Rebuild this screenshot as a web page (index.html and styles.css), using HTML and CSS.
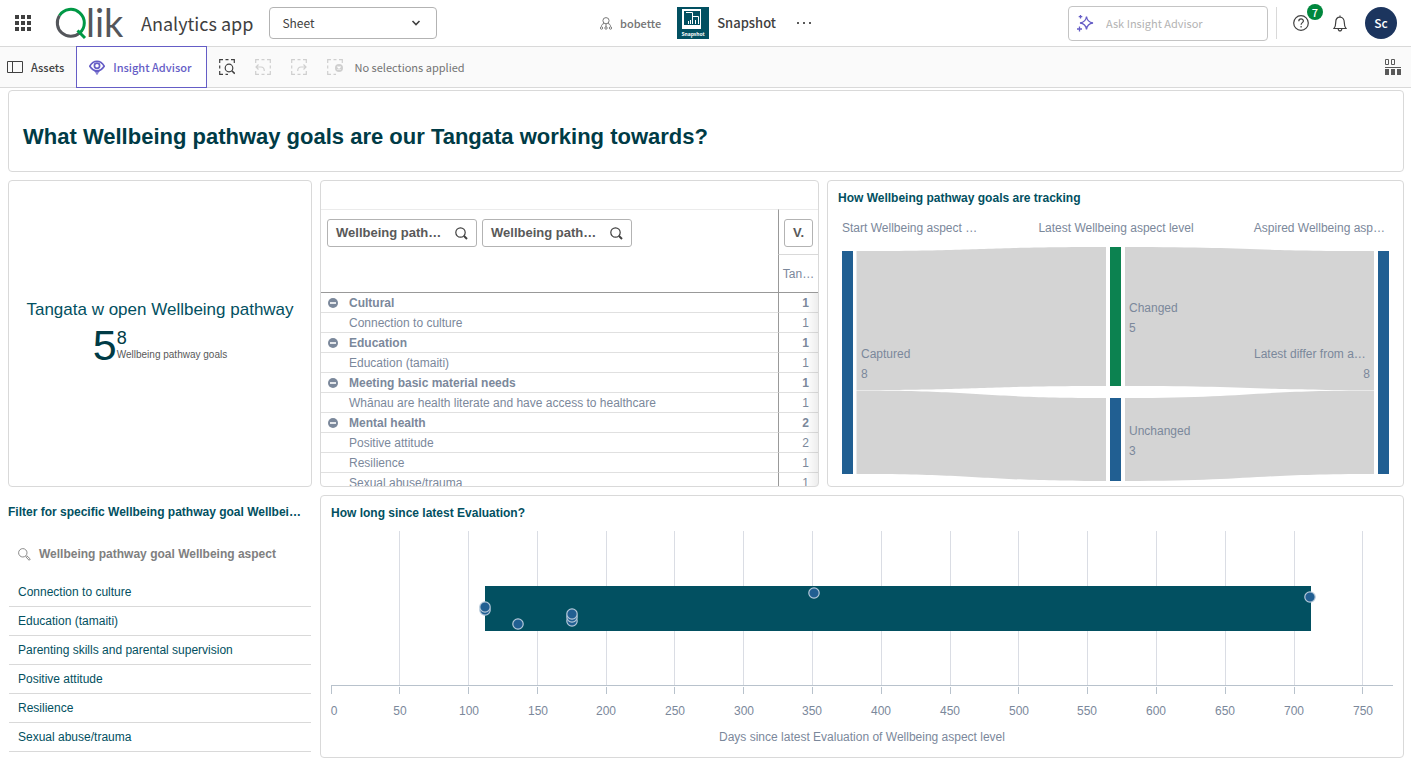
FILE: index.html
```html
<!DOCTYPE html>
<html lang="en">
<head>
<meta charset="utf-8">
<title>Snapshot - Analytics app</title>
<meta name="viewport" content="width=device-width, initial-scale=1">
<link rel="stylesheet" href="styles.css">
</head>
<body>
<header class="topbar">
  <div class="topbar-left">
    <button class="icon-btn launcher" aria-label="Navigation menu">
      <svg width="16" height="16" viewBox="0 0 16 16" fill="#404040"><path d="M0 0h4v4H0zM6 0h4v4H6zM12 0h4v4h-4zM0 6h4v4H0zM6 6h4v4H6zM12 6h4v4h-4zM0 12h4v4H0zM6 12h4v4H6zM12 12h4v4h-4z"/></svg>
    </button>
    <a class="logo" href="#" aria-label="Qlik">
      <svg class="logo-art" width="70" height="32" viewBox="0 0 70 32">
        <path d="M4.500 8.500A13.500 13.500 0 0 0 24.500 26.200" fill="none" stroke="#54565b" stroke-width="3"/>
        <path d="M4.500 8.500A13.500 13.500 0 1 1 24.500 26.200" fill="none" stroke="#009845" stroke-width="3"/>
        <path d="M22.500 23.500L30 31" stroke="#009845" stroke-width="3"/>
        <text class="logo-text" x="31" y="30">lik</text>
      </svg>
    </a>
    <span class="app-name">Analytics app</span>
    <div class="select-wrap">
      <select class="sheet-select" aria-label="View"><option>Sheet</option></select>
      <svg class="select-arrow" width="10" height="6" viewBox="0 0 10 6" fill="none" stroke="#404040" stroke-width="1.600"><path d="M1.500 1L5 4.500 8.500 1"/></svg>
    </div>
  </div>
  <div class="topbar-center">
    <a class="space" href="#">
      <svg width="12" height="13" viewBox="0 0 12 13" fill="none" stroke="#7a7a7a"><circle cx="6" cy="3.700" r="3.100"/><path d="M6 7v3M4.300 6.400C2 7 1.500 8 1.500 9.500M7.700 6.400C10 7 10.500 8 10.500 9.500"/><circle cx="1.500" cy="11" r="1.200"/><circle cx="6" cy="11" r="1.200"/><circle cx="10.500" cy="11" r="1.200"/></svg>
      <span>bobette</span>
    </a>
    <svg class="app-thumb" width="32" height="32" viewBox="0 0 32 32">
      <path d="M0 0h32v32H0z" fill="#025061"/><path d="M5 2h19v20H5z" fill="#fff"/><path d="M7 4h16v14H7z" fill="#025061"/>
      <path d="M9 5.500h6.500V17M15.500 9.500h6V17M11.500 17v-3M13.500 17v-4M18.500 17v-4" fill="none" stroke="#fff"/>
      <text class="thumb-text" x="16" y="29" text-anchor="middle">Snapshot</text>
    </svg>
    <span class="app-title">Snapshot</span>
    <button class="icon-btn more" aria-label="More">
      <svg width="16" height="4" viewBox="0 0 16 4" fill="#595959"><path d="M1 1h2v2H1zM7 1h2v2H7zM13 1h2v2h-2z"/></svg>
    </button>
  </div>
  <div class="topbar-right">
    <label class="ask">
      <svg width="17" height="18" viewBox="0 0 17 18" fill="none" stroke="#655dc6" stroke-width="1.300"><path d="M9.500 2.500C10 6.500 12 8.500 16 9 12 9.500 10 11.500 9.500 15.500 9 11.500 7 9.500 3 9 7 8.500 9 6.500 9.500 2.500z"/><path d="M3.500 1v3.500M1.700 2.700h3.600M2.500 12.500v5M0 15h5"/></svg>
      <input class="ask-input" type="text" placeholder="Ask Insight Advisor" aria-label="Ask Insight Advisor">
    </label>
    <span class="divider"></span>
    <button class="icon-btn help" aria-label="Help">
      <svg width="16" height="16" viewBox="0 0 16 16" fill="none" stroke="#404040" stroke-width="1.200"><circle cx="8" cy="8" r="7.300"/><path d="M5.800 6.200c0-3 4.600-2.900 4.600-.2 0 1.600-2.300 1.700-2.300 3.700"/><path d="M8.100 11v1.400"/></svg>
      <span class="badge">7</span>
    </button>
    <button class="icon-btn" aria-label="Notifications">
      <svg width="14" height="17" viewBox="0 0 14 17" fill="none" stroke="#404040" stroke-width="1.200"><path d="M1 13.500C2.500 12 2.700 10.500 2.700 7.500 2.700 4 4.500 2.200 7 2.200s4.300 1.800 4.300 5.300c0 3 .2 4.500 1.700 6zM7 2.200V.4M5.200 13.700c.2 3 3.400 3 3.600 0"/></svg>
    </button>
    <button class="avatar" aria-label="Profile">Sc</button>
  </div>
</header>

<nav class="toolbar">
  <button class="tool assets">
    <svg width="16" height="12" viewBox="0 0 16 12" fill="none" stroke="#404040"><path d="M.5.5h15v11H.5zM5.500.5v11"/></svg>
    <span>Assets</span>
  </button>
  <button class="tool insight">
    <svg width="16" height="15" viewBox="0 0 16 15"><path d="M.8 6.200C4.500-.4 11.500-.4 15.200 6.200 13 9.500 11 10.800 8 10.800S3 9.500.8 6.200z" fill="none" stroke="#655dc6" stroke-width="1.700"/><circle cx="8" cy="5.800" r="2.600" fill="none" stroke="#655dc6" stroke-width="1.700"/><path d="M5 10.500h6l-1.500 2.200h-3zM6.500 13.300h3L8 15z" fill="#655dc6"/></svg>
    <span>Insight Advisor</span>
  </button>
  <div class="selection-tools">
    <button class="icon-btn" aria-label="Selections tool">
      <svg width="16" height="16" viewBox="0 0 16 16" fill="none" stroke="#404040" stroke-width="1.200"><path d="M.7 4V.7H4M6.500.7h3M12 .7h3.300V4M.7 6.500v3M.7 12v3.300H4M6.500 15.300H9"/><circle cx="10" cy="9" r="3.800"/><path d="M12.800 11.800l3 3" stroke-width="1.600"/></svg>
    </button>
    <button class="icon-btn" aria-label="Step back" disabled>
      <svg width="16" height="16" viewBox="0 0 16 16" fill="none" stroke="#cfcfcf" stroke-width="1.200"><path d="M.7 4V.7H4M6.500.7h3M12 .7h3.300V4M.7 12v3.300H4M6.500 15.300h3M12 15.300h3.300V12M15.300 6.500v3M3.500 5.500L1 8l2.500 2.500M1 8h5c2.500 0 3.300 1.500 3.300 4"/></svg>
    </button>
    <button class="icon-btn" aria-label="Step forward" disabled>
      <svg width="16" height="16" viewBox="0 0 16 16" fill="none" stroke="#cfcfcf" stroke-width="1.200"><path d="M.7 4V.7H4M6.500.7h3M12 .7h3.300V4M.7 12v3.300H4M6.500 15.300h3M12 15.300h3.300V12M.7 6.500v3M12.500 5.500L15 8l-2.500 2.500M15 8h-5c-2.500 0-3.300 1.500-3.300 4"/></svg>
    </button>
    <button class="icon-btn" aria-label="Clear all selections" disabled>
      <svg width="16" height="16" viewBox="0 0 16 16" fill="none" stroke="#cfcfcf" stroke-width="1.200"><path d="M.7 4V.7H4M6.500.7h3M12 .7h3.300V4M.7 6.500v3M.7 12v3.300H4M6.500 15.300H9"/><circle cx="12" cy="9" r="4" fill="#cfcfcf" stroke="none"/><path d="M10.500 7.500l3 3M13.500 7.500l-3 3" stroke="#fff" stroke-width="1.400"/></svg>
    </button>
  </div>
  <span class="selection-text">No selections applied</span>
  <button class="icon-btn sheets" aria-label="Sheets">
    <svg width="16" height="16" viewBox="0 0 16 16" fill="#595959"><path d="M0 8h16v1H0zM0 10h4v6H0zM6 10h4v6H6zM12 10h4v6h-4z"/><path d="M.5.5h3v5h-3zM6.500.5h3v5h-3z" fill="none" stroke="#595959"/></svg>
  </button>
</nav>

<main class="sheet">
  <section class="card banner"><h1 class="banner-title">What Wellbeing pathway goals are our Tangata working towards?</h1></section>

  <section class="card kpi">
    <h2 class="kpi-title">Tangata w open Wellbeing pathway</h2>
    <div class="kpi-values">
      <span class="kpi-main">5</span>
      <div class="kpi-second"><span class="kpi-count">8</span><span class="kpi-label">Wellbeing pathway goals</span></div>
    </div>
  </section>

  <section class="card pivot">
    <table class="pivot-table">
      <colgroup><col><col class="measure-col"></colgroup>
      <thead>
        <tr>
          <th class="dims" rowspan="2"><div class="dim-buttons">
            <button class="dim-btn"><span>Wellbeing path…</span><svg width="13" height="13" viewBox="0 0 13 13" fill="none" stroke="#404040" stroke-width="1.200"><circle cx="5.500" cy="5.500" r="4.700"/><path d="M9 9l3 3" stroke-width="2"/></svg></button>
            <button class="dim-btn"><span>Wellbeing path…</span><svg width="13" height="13" viewBox="0 0 13 13" fill="none" stroke="#404040" stroke-width="1.200"><circle cx="5.500" cy="5.500" r="4.700"/><path d="M9 9l3 3" stroke-width="2"/></svg></button>
          </div></th>
          <th class="values-head"><button class="values-btn">V.</button></th>
        </tr>
        <tr><th class="measure-head">Tan…</th></tr>
      </thead>
      <tbody>
        <tr class="group"><td><button class="toggle" aria-label="Collapse Cultural"></button>Cultural</td><td>1</td></tr>
        <tr><td>Connection to culture</td><td>1</td></tr>
        <tr class="group"><td><button class="toggle" aria-label="Collapse Education"></button>Education</td><td>1</td></tr>
        <tr><td>Education (tamaiti)</td><td>1</td></tr>
        <tr class="group"><td><button class="toggle" aria-label="Collapse Meeting basic material needs"></button>Meeting basic material needs</td><td>1</td></tr>
        <tr><td>Whānau are health literate and have access to healthcare</td><td>1</td></tr>
        <tr class="group"><td><button class="toggle" aria-label="Collapse Mental health"></button>Mental health</td><td>2</td></tr>
        <tr><td>Positive attitude</td><td>2</td></tr>
        <tr><td>Resilience</td><td>1</td></tr>
        <tr><td>Sexual abuse/trauma</td><td>1</td></tr>
      </tbody>
    </table>
  </section>

  <section class="card chart">
    <h2 class="chart-title">How Wellbeing pathway goals are tracking</h2>
    <svg class="plot" viewBox="0 0 575 274">
      <g fill="#d4d4d4">
        <path d="M28.500 39C153 39 153 35 278 35V174C153 174 153 178 28.500 178z"/>
        <path d="M28.500 178.500C153 178.500 153 186 278 186V269C153 269 153 262 28.500 262z"/>
        <path d="M297 35C422 35 422 39 546 39V178C422 178 422 174 297 174z"/>
        <path d="M297 186C422 186 422 178.500 546 178.500V262C422 262 422 269 297 269z"/>
      </g>
      <path d="M14 39h11v223H14zM282 186h11v83h-11zM550 39h11v223h-11z" fill="#215f92"/>
      <path d="M282 35h11v139h-11z" fill="#0c8250"/>
      <g class="plot-text">
        <text x="14" y="20">Start Wellbeing aspect …</text>
        <text x="288" y="20" text-anchor="middle">Latest Wellbeing aspect level</text>
        <text x="557" y="20" text-anchor="end">Aspired Wellbeing asp…</text>
        <text x="33" y="146">Captured</text><text x="33" y="166">8</text>
        <text x="301" y="100">Changed</text><text x="301" y="120">5</text>
        <text x="426" y="146">Latest differ from a…</text><text x="542" y="166" text-anchor="end">8</text>
        <text x="301" y="223">Unchanged</text><text x="301" y="243">3</text>
      </g>
    </svg>
  </section>

  <section class="filter">
    <h2 class="filter-title">Filter for specific Wellbeing pathway goal Wellbeing aspect</h2>
    <button class="filter-field">
      <svg width="13" height="13" viewBox="0 0 13 13" fill="none" stroke="#8a8a8a"><circle cx="4.800" cy="4.800" r="4.200"/><path d="M7.800 8.800l1-1 3.500 3.200-1.200 1.300z"/></svg>
      <span>Wellbeing pathway goal Wellbeing aspect</span>
    </button>
    <ul class="filter-list">
      <li>Connection to culture</li>
      <li>Education (tamaiti)</li>
      <li>Parenting skills and parental supervision</li>
      <li>Positive attitude</li>
      <li>Resilience</li>
      <li>Sexual abuse/trauma</li>
    </ul>
  </section>

  <section class="card chart evaluation">
    <h2 class="chart-title">How long since latest Evaluation?</h2>
    <svg class="plot" viewBox="0 0 1082 230">
      <path d="M78.500 4v154M147.500 4v154M216.500 4v154M285.500 4v154M353.500 4v154M422.500 4v154M491.500 4v154M560.500 4v154M629.500 4v154M697.500 4v154M766.500 4v154M835.500 4v154M904.500 4v154M973.500 4v154M1041.500 4v154" stroke="#dadde4"/>
      <path d="M10 158.500h1062M10.500 158v9M78.500 160v7M147.500 160v7M216.500 160v7M285.500 160v7M353.500 160v7M422.500 160v7M491.500 160v7M560.500 160v7M629.500 160v7M697.500 160v7M766.500 160v7M835.500 160v7M904.500 160v7M973.500 160v7M1041.500 160v7" fill="none" stroke="#b8c2cc"/>
      <path d="M164 59h826v45H164z" fill="#025061"/>
      <g fill="#215f92" stroke="#b5c9da" stroke-width="1.200">
        <circle cx="164" cy="83" r="5.200"/><circle cx="164" cy="80" r="5.200"/><circle cx="197" cy="97" r="5.200"/>
        <circle cx="251" cy="94" r="5.200"/><circle cx="251" cy="90" r="5.200"/><circle cx="251" cy="87" r="5.200"/>
        <circle cx="493" cy="66" r="5.200"/><circle cx="989" cy="70" r="5.200"/>
      </g>
      <g class="plot-text" text-anchor="middle">
        <text x="13" y="188">0</text><text x="79" y="188">50</text><text x="148" y="188">100</text><text x="217" y="188">150</text><text x="285" y="188">200</text><text x="354" y="188">250</text><text x="423" y="188">300</text><text x="491" y="188">350</text><text x="560" y="188">400</text><text x="629" y="188">450</text><text x="698" y="188">500</text><text x="766" y="188">550</text><text x="835" y="188">600</text><text x="904" y="188">650</text><text x="973" y="188">700</text><text x="1042" y="188">750</text>
        <text x="541" y="214">Days since latest Evaluation of Wellbeing aspect level</text>
      </g>
    </svg>
  </section>
</main>
</body>
</html>
```
FILE: styles.css
```css
:root {
  --ui: "Noto Sans CJK SC", "Noto Sans", sans-serif;
  --data: "Liberation Sans", Arial, sans-serif;
  --teal: #025061;
  --slate: #7b889b;
  --line: #d9d9d9;
}

* { box-sizing: border-box; }

body {
  display: flex;
  flex-direction: column;
  min-height: 100vh;
  margin: 0;
  background: #fff;
  font: 12px/16px var(--data);
}

button, select, input { font: inherit; color: inherit; }
h1, h2, ul { margin: 0; padding: 0; }
svg { display: block; flex: none; }

.icon-btn {
  display: flex;
  align-items: center;
  justify-content: center;
  padding: 0;
  border: 0;
  background: none;
}

/* Top bar */
.topbar {
  display: grid;
  grid-template-columns: 1fr auto 1fr;
  align-items: center;
  height: 46px;
  padding: 0 14px 0 15px;
  color: #404040;
  font-family: var(--ui);
}

.topbar-left, .topbar-center, .topbar-right, .space { display: flex; align-items: center; }
.logo { margin-left: 24px; }
.logo-art { overflow: visible; }
.logo-text { font: 38px/38px Lato, sans-serif; fill: #54565b; }
.app-name { margin-left: 16px; font-size: 18px; line-height: 24px; }

.select-wrap { position: relative; width: 168px; margin-left: 16px; }
.sheet-select {
  width: 100%;
  height: 32px;
  padding: 0 12px;
  border: 1px solid #b3b3b3;
  border-radius: 4px;
  background: #fff;
  appearance: none;
}
.select-arrow { position: absolute; top: 13px; right: 16px; pointer-events: none; }

.space { gap: 8px; color: #737373; font-size: 11px; font-weight: 500; text-decoration: none; }
.app-thumb { margin-left: 16px; }
.thumb-text { font: bold 5px var(--ui); fill: #fff; }
.app-title { margin-left: 8px; font-size: 13px; font-weight: 500; }
.more { margin-left: 20px; }

.topbar-right { justify-content: flex-end; }
.ask {
  display: flex;
  align-items: center;
  gap: 12px;
  width: 200px;
  height: 35px;
  padding: 0 8px;
  border: 1px solid #c4c4c4;
  border-radius: 4px;
}
.ask-input { flex: 1; min-width: 0; padding: 0; border: 0; outline: 0; background: none; font-size: 11px; }
.ask-input::placeholder { color: #b3b3b3; opacity: 1; }
.divider { width: 1px; height: 32px; margin: 0 16px 0 8px; background: #d9d9d9; }
.help { position: relative; margin-right: 24px; }
.badge {
  position: absolute;
  top: -11px;
  left: 14px;
  width: 16px;
  height: 16px;
  border-radius: 50%;
  background: #00873d;
  color: #fff;
  font-size: 11px;
  font-weight: 500;
  line-height: 16px;
  text-align: center;
}
.avatar {
  width: 32px;
  height: 32px;
  margin-left: 18px;
  padding: 0;
  border: 0;
  border-radius: 50%;
  background: #1c355e;
  color: #fff;
  font-weight: 500;
}

/* Toolbar */
.toolbar {
  display: flex;
  align-items: center;
  height: 42px;
  padding-right: 10px;
  border: solid var(--line);
  border-width: 1px 0;
  background: #fafafa;
  color: #404040;
  font-family: var(--ui);
}
.tool {
  display: flex;
  align-items: center;
  align-self: stretch;
  gap: 8px;
  padding: 0;
  border: 0;
  background: none;
  font-size: 11px;
  font-weight: 500;
}
.assets { padding: 0 12px 0 7px; }
.insight {
  margin: -1px 0;
  padding: 0 14px 0 12px;
  border: 1px solid #655dc6;
  background: #fff;
  color: #655dc6;
}
.selection-tools { display: flex; gap: 20px; margin: 0 12px; }
.selection-text { color: #737373; font-size: 11px; }
.sheets { margin-left: auto; }

/* Sheet grid */
.sheet {
  display: grid;
  flex: 1;
  grid-template-columns: 304fr 499fr 577fr;
  grid-template-rows: 82px 307px minmax(263px, 1fr);
  gap: 8px;
  padding: 2px 7px 6px 8px;
}
.card { min-width: 0; border: 1px solid var(--line); border-radius: 4px; overflow: hidden; }
.banner { display: flex; grid-column: 1 / -1; align-items: center; padding: 12px 14px 0; }
.banner-title { color: #003b46; font-size: 22px; line-height: 28px; }

.kpi { display: flex; flex-direction: column; align-items: center; justify-content: center; }
.kpi-title { color: var(--teal); font-size: 17px; font-weight: 400; line-height: 22px; white-space: nowrap; }
.kpi-values { display: flex; align-items: center; color: #003b46; line-height: 48px; }
.kpi-main { font-size: 43px; }
.kpi-second { display: flex; flex-direction: column; }
.kpi-count { font-size: 18px; line-height: 20px; }
.kpi-label { color: #595959; font-size: 10px; line-height: 14px; }

/* Pivot table */
.pivot { position: relative; padding-top: 28px; }
.pivot::after {
  content: "";
  position: absolute;
  right: 0;
  bottom: 0;
  width: 12px;
  height: 193px;
  background: linear-gradient(to left, #00000012, #0000);
}
.pivot-table { width: 100%; border-spacing: 0; table-layout: fixed; color: var(--slate); }
.measure-col { width: 40px; }
.pivot-table th { padding: 0; border-top: 1px solid #ebebeb; border-bottom: 1px solid #999; font-weight: 400; }
.pivot-table .values-head { height: 45px; padding-top: 2px; border-bottom: 0; }
.pivot-table .measure-head { height: 39px; border-top-color: var(--line); }
.pivot-table .dims { vertical-align: top; }
.pivot-table th:last-child:not(.dims), .pivot-table td:last-child { border-left: 1px solid #999; }
.dim-buttons { display: flex; gap: 5px; padding: 9px 6px; }
.dim-btn, .values-btn {
  height: 28px;
  border: 1px solid #b3b3b3;
  border-radius: 3px;
  background: #fff;
  color: #595959;
  font-size: 13px;
  font-weight: 700;
}
.dim-btn { display: flex; align-items: center; justify-content: space-between; width: 150px; padding: 0 8px; }
.values-btn { width: 29px; padding: 0; }
.pivot-table td { height: 20px; padding: 0 9px 0 28px; border-bottom: 1px solid #e0e0e0; line-height: 16px; }
.pivot-table td:last-child { padding-left: 0; text-align: right; }
.group { font-weight: 700; }
.toggle {
  display: inline-block;
  width: 10px;
  height: 10px;
  margin: 0 11px 0 -21px;
  padding: 0;
  border: 0;
  border-radius: 50%;
  background: linear-gradient(#e4e7eb, #e4e7eb) center / 6px 2px no-repeat var(--slate);
  vertical-align: -1px;
}

/* Charts */
.chart-title { padding: 9px 10px 6px; color: var(--teal); font-size: 12px; line-height: 16px; }
.plot { width: 100%; height: auto; }
.plot-text { font: 12px var(--data); fill: var(--slate); }
.evaluation { grid-column: 2 / -1; }

/* Filter pane */
.filter { min-width: 0; color: var(--teal); }
.filter-title {
  padding: 9px 8px 0 0;
  font-size: 12px;
  line-height: 16px;
  overflow: hidden;
  text-overflow: ellipsis;
  white-space: nowrap;
}
.filter-field {
  display: flex;
  align-items: center;
  gap: 8px;
  width: 100%;
  margin: 22px 0 12px;
  padding: 4px 10px;
  border: 0;
  background: none;
  color: #808080;
  font-weight: 700;
}
.filter-list { margin: 0 1px; list-style: none; }
.filter-list li { height: 29px; padding: 0 9px; border-bottom: 1px solid var(--line); line-height: 28px; }
```
